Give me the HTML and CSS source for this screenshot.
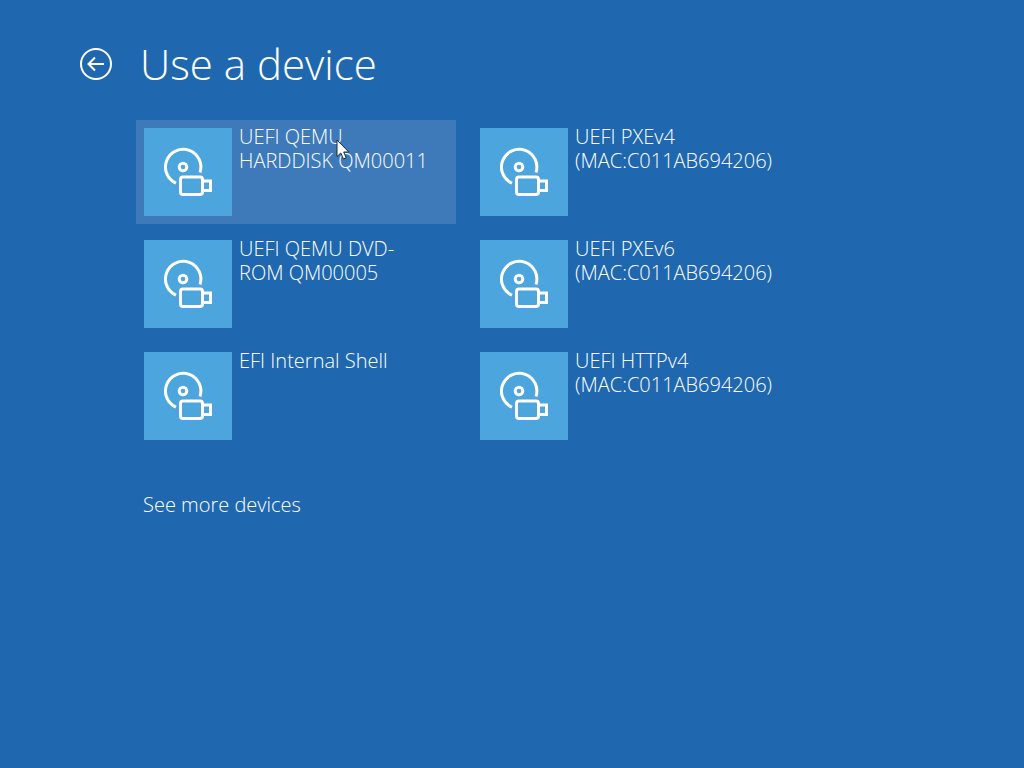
FILE: index.html
```html
<!DOCTYPE html>
<html lang="en">
<head>
  <meta charset="UTF-8">
  <meta name="viewport" content="width=device-width, initial-scale=1">
  <title>Use a device</title>
  <link rel="stylesheet" href="styles.css">
</head>
<body>
  <svg class="sprite" aria-hidden="true">
    <symbol id="device" viewBox="0 0 88 88">
      <path d="M32 55.200A17.700 17.700 0 1 1 56 44.500"/>
      <circle cx="39" cy="39" r="3.800"/>
      <rect x="36.500" y="49" width="22" height="17.500" rx="2.500"/>
      <path d="M59 53H66.500V62.500H59"/>
    </symbol>
  </svg>

  <header class="header">
    <button class="back" type="button" aria-label="Back">
      <svg viewBox="0 0 32 32">
        <circle cx="16" cy="16" r="15"/>
        <path d="M24 16H9M15 9.500L8.500 16L15 22.500"/>
      </svg>
    </button>
    <h1 class="title">Use a device</h1>
  </header>

  <main class="content">
    <div class="devices">
      <button class="device active" type="button">
        <svg class="icon"><use href="#device"/></svg>
        <span class="label">UEFI QEMU HARDDISK QM00011</span>
        <svg class="cursor" viewBox="0 0 14 22" aria-hidden="true">
          <path d="M1 1V17.500L4.800 14L7.400 20L10.200 18.800L7.700 13H12.800Z"/>
        </svg>
      </button>
      <button class="device" type="button">
        <svg class="icon"><use href="#device"/></svg>
        <span class="label">UEFI PXEv4 (MAC:C011AB694206)</span>
      </button>
      <button class="device" type="button">
        <svg class="icon"><use href="#device"/></svg>
        <span class="label">UEFI QEMU DVD-ROM QM00005</span>
      </button>
      <button class="device" type="button">
        <svg class="icon"><use href="#device"/></svg>
        <span class="label">UEFI PXEv6 (MAC:C011AB694206)</span>
      </button>
      <button class="device" type="button">
        <svg class="icon"><use href="#device"/></svg>
        <span class="label">EFI Internal Shell</span>
      </button>
      <button class="device" type="button">
        <svg class="icon"><use href="#device"/></svg>
        <span class="label">UEFI HTTPv4 (MAC:C011AB694206)</span>
      </button>
    </div>
    <a class="more" href="#more">See more devices</a>
  </main>
</body>
</html>
```

FILE: styles.css
```css
body {
  margin: 0;
  padding: 32px 80px;
  background: #1f68b0;
  color: white;
  font-family: "Open Sans", "Noto Sans", sans-serif;
  font-weight: 300;
  font-size: 20px;
  line-height: 24px;
}

button {
  border: none;
  padding: 0;
  background: none;
  color: inherit;
  font: inherit;
  text-align: left;
}

.sprite {
  display: block;
  width: 0;
  height: 0;
}

.header {
  display: flex;
  align-items: center;
  gap: 28px;
}

.back,
.back svg {
  display: block;
  width: 32px;
  height: 32px;
}

.back svg {
  fill: none;
  stroke: white;
  stroke-width: 2;
}

.title {
  margin: 0;
  font-size: 42px;
  font-weight: 300;
  line-height: 64px;
}

.content {
  margin: 24px 0 0 56px;
}

.devices {
  display: grid;
  grid-template-columns: repeat(2, minmax(0, 320px));
  gap: 8px 16px;
}

.device {
  position: relative;
  display: flex;
  align-items: flex-start;
  gap: 7px;
  padding: 0 24px 0 8px;
}

.device.active,
.device:hover {
  background: #3e7ab9;
}

.icon {
  flex: none;
  width: 88px;
  height: 88px;
  margin: 8px 0;
  background: #4ca5dc;
  fill: none;
  stroke: white;
  stroke-width: 3;
}

.label {
  margin-top: 5px;
}

.cursor {
  position: absolute;
  top: 19px;
  left: 200px;
  width: 14px;
  height: 22px;
  fill: white;
  stroke: #1b2a3c;
  stroke-width: 1;
}

.more {
  display: inline-block;
  margin: 45px 0 0 7px;
  color: inherit;
  text-decoration: none;
}

.more:hover {
  text-decoration: underline;
}
```
